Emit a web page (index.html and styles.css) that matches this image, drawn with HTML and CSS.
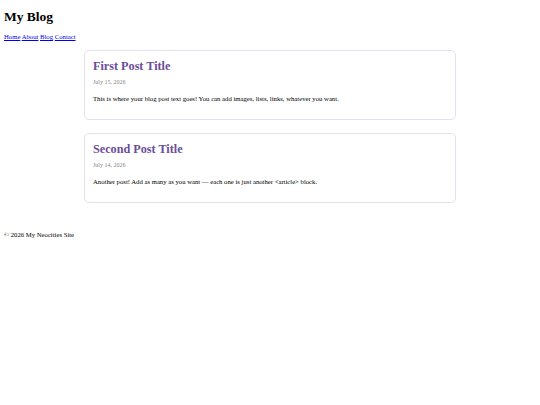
FILE: index.html
```html
<!DOCTYPE html>
<html lang="en">
<head>
<meta charset="UTF-8" />
<meta name="viewport" content="width=device-width,initial-scale=1.0" />
<title>My Blog</title>
<link rel="stylesheet" href="styles.css">
</head>
<body>
  <header>
    <h1>My Blog</h1>
    <nav>
      <a href="#">Home</a>
      <a href="#">About</a>
      <a href="#">Blog</a>
      <a href="#">Contact</a>
    </nav>
  </header>

  <main>
    <article class="post">
      <h2>First Post Title</h2>
      <p class="date">July 15, 2026</p>
      <p>This is where your blog post text goes! You can add images, lists, links, whatever you want.</p>
    </article>

    <article class="post">
      <h2>Second Post Title</h2>
      <p class="date">July 14, 2026</p>
      <p>Another post! Add as many as you want — each one is just another &lt;article&gt; block.</p>
    </article>
  </main>

  <footer>
    <p>&copy; 2026 My Neocities Site</p>
  </footer>
</body>
</html>
```

FILE: styles.css
```css
body { margin: 4px; font-family: "Liberation Serif", "Times New Roman", serif; font-size: 6.7px; color: #000; background: #fff; }
h1 { font-size: 13.5px; line-height: 16px; margin: 5px 0 8px; }
nav { line-height: 8px; }
nav a { color: #0000ee; }
main { max-width: 372px; margin: 9px auto 0; }
.post { border: 1px solid #e4e0ef; border-radius: 5px; padding: 0 8px; margin-bottom: 13px; }
.post h2 { color: #6b4c9a; font-size: 12.2px; line-height: 14px; margin: 8px 0 5px; }
.post p { font-size: 6.7px; line-height: 8px; margin: 0 0 16px; }
.post .date { color: #888; font-size: 6px; margin-bottom: 9px; }
footer { margin-top: 28px; }
footer p { font-size: 6.7px; line-height: 8px; margin: 0; }
```
